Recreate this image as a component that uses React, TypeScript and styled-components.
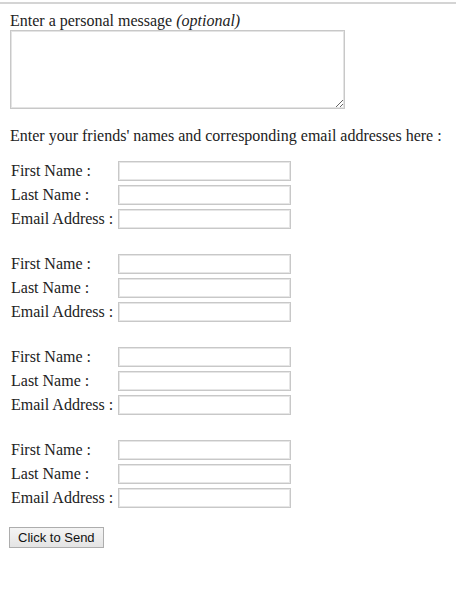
import React from "react";
import styled, { createGlobalStyle } from "styled-components";

const GlobalStyle = createGlobalStyle`
  html, body {
    margin: 0;
    padding: 0;
    background: #fff;
  }
  body {
    font-family: "Liberation Serif", "Times New Roman", serif;
    font-size: 16px;
    color: #222;
  }
`;

const Page = styled.div`
  padding: 0 10px;
`;

const Rule = styled.div`
  height: 2px;
  background: #d4d4d4;
  margin: 2px 0 0;
`;

const Prompt = styled.div`
  margin-top: 7px;
  line-height: 19px;
`;

const Optional = styled.em`
  font-style: italic;
`;

const Message = styled.textarea`
  display: block;
  box-sizing: border-box;
  width: 335px;
  height: 79px;
  margin: 0;
  border: 1px solid #c8c8c8;
  outline: 1px solid #e4e4e4;
  outline-offset: -2px;
  resize: both;
`;

const Intro = styled.p`
  margin: 17px 0 16px;
  line-height: 19px;
`;

const Friends = styled.div`
  display: flex;
  flex-direction: column;
  gap: 25px;
`;

const Group = styled.div`
  display: grid;
  grid-template-columns: 108px 173px;
  row-gap: 4px;
  align-items: center;
`;

const Label = styled.label`
  padding-left: 1px;
  line-height: 20px;
  white-space: nowrap;
`;

const Field = styled.input`
  box-sizing: border-box;
  width: 173px;
  height: 20px;
  margin: 0;
  border: 1px solid #c8c8c8;
  outline: 1px solid #e6e6e6;
  outline-offset: -2px;
  font-size: 13px;
`;

const SendButton = styled.button`
  display: block;
  margin: 19px 0 0 -1px;
  height: 21px;
  padding: 0 8px;
  font-family: "Liberation Sans", Arial, sans-serif;
  font-size: 13px;
  color: #111;
  background: linear-gradient(#f4f4f4, #e4e4e4);
  border: 1px solid #adadad;
  border-radius: 0;
`;

const friends = [1, 2, 3, 4];

export default function App() {
  return (
    <>
      <GlobalStyle />
      <Rule />
      <Page>
        <Prompt>
          Enter a personal message <Optional>(optional)</Optional>
        </Prompt>
        <Message />
        <Intro>
          Enter your friends' names and corresponding email addresses here :
        </Intro>
        <Friends>
          {friends.map((n) => (
            <Group key={n}>
              <Label>First Name :</Label>
              <Field type="text" />
              <Label>Last Name :</Label>
              <Field type="text" />
              <Label>Email Address :</Label>
              <Field type="text" />
            </Group>
          ))}
        </Friends>
        <SendButton type="button">Click to Send</SendButton>
      </Page>
    </>
  );
}
